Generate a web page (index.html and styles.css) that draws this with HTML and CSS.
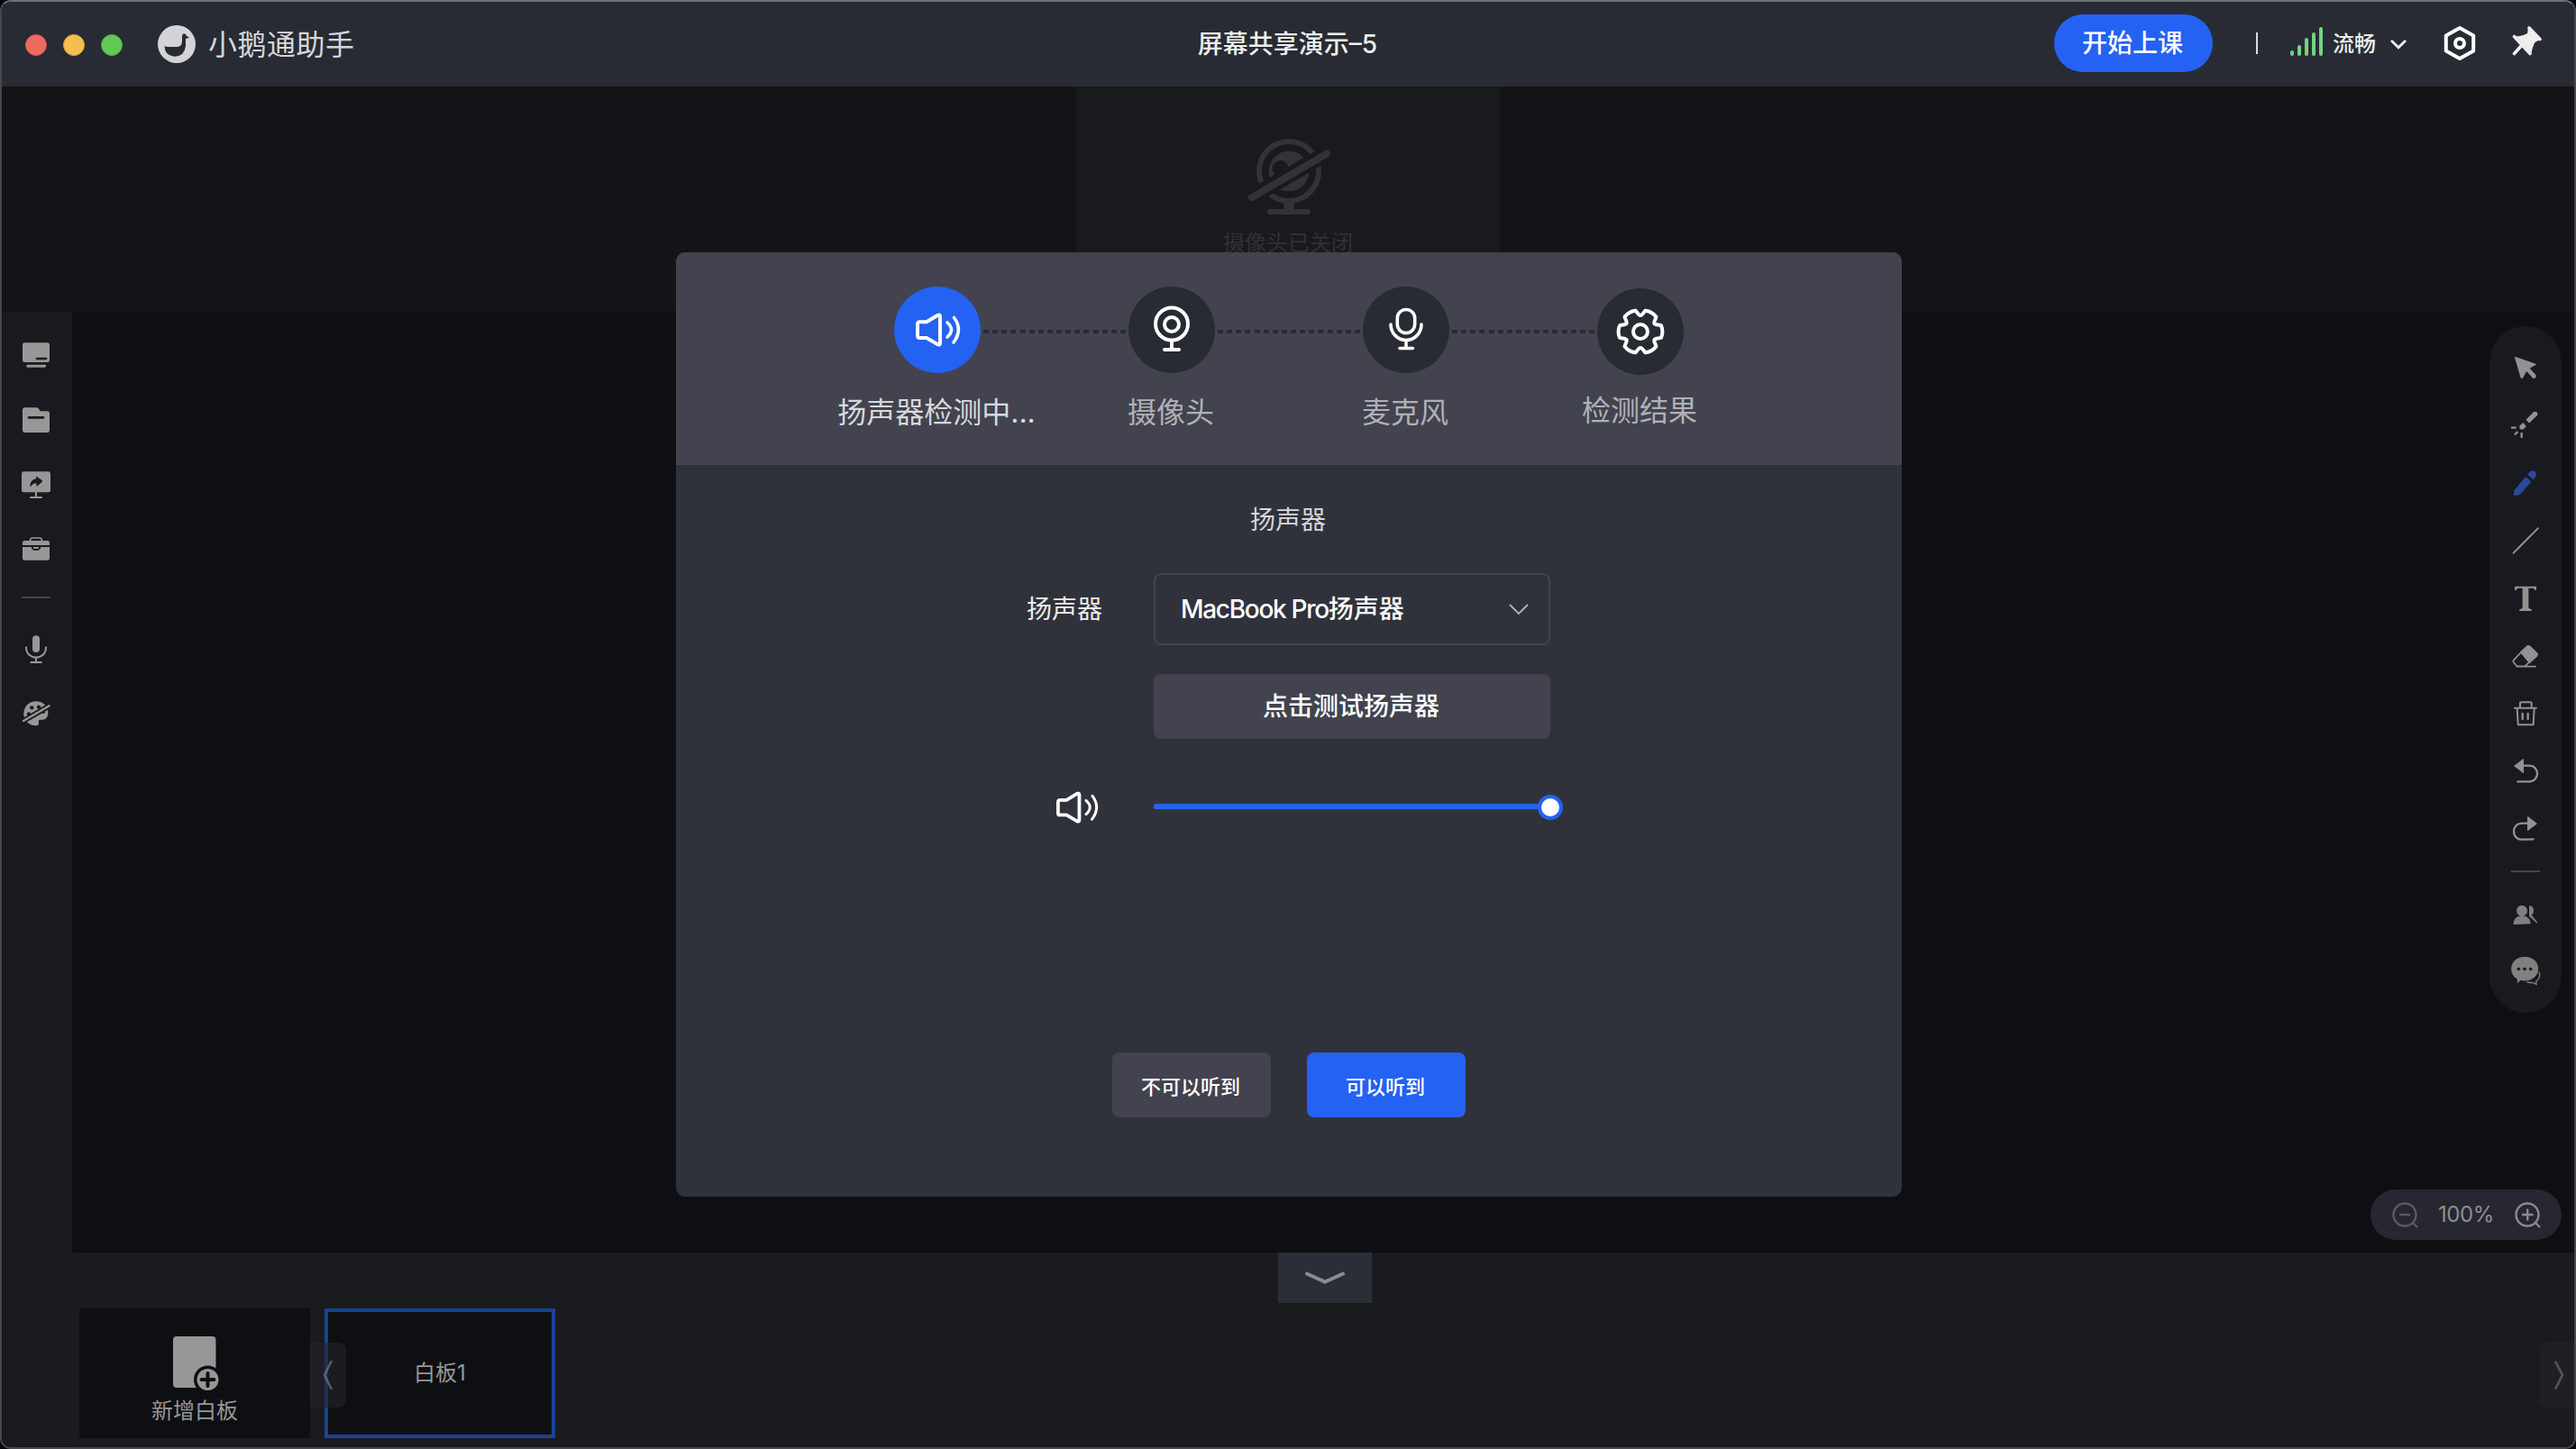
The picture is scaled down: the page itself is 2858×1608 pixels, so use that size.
FILE: index.html
```html
<!DOCTYPE html>
<html lang="zh-CN">
<head>
<meta charset="utf-8">
<title>小鹅通助手</title>
<link rel="stylesheet" href="styles.css">
</head>
<body>
<div class="window">
  <header class="titlebar">
    <div class="titlebar-left">
      <div class="lights"><i class="light red"></i><i class="light yellow"></i><i class="light green"></i></div>
      <svg class="logo" viewBox="525 83 126 126"><circle cx="588" cy="146" r="63" fill="#d4d4d7"/><path fill="#282b33" d="M548 152Q552 155 560 155H590Q606 153 606 136V120Q607 111 613 111Q619 112 621 119L629 123Q628 128 618 127V152Q614 186 582 187Q548 184 548 152Z"/></svg>
      <span class="brand">小鹅通助手</span>
    </div>
    <h1 class="title">屏幕共享演示–5</h1>
    <div class="titlebar-right">
      <button class="start">开始上课</button>
      <i class="sep"></i>
      <svg class="signal" viewBox="0 0 36 32" fill="#73d286"><rect y="26" width="4" height="6" rx="2"/><rect x="8" y="20" width="4" height="12" rx="2"/><rect x="16" y="12" width="4" height="20" rx="2"/><rect x="24" y="6" width="4" height="26" rx="2"/><rect x="32" width="4" height="32" rx="2"/></svg>
      <span class="network">流畅</span>
      <svg class="caret" viewBox="0 0 16 10"><path d="M1.5 1.5L8 8L14.500 1.500" fill="none" stroke="#eee" stroke-width="2.600" stroke-linecap="round"/></svg>
      <svg class="settings" viewBox="0 0 36 40" fill="none" stroke="#fff" stroke-width="4" stroke-linejoin="round"><path d="M18 3L33.200 11.500V28.500L18 37L2.800 28.500V11.500Z"/><circle cx="18" cy="20" r="5"/></svg>
      <svg class="pin" viewBox="0 0 34 34" stroke="#eee" stroke-width="3.600" stroke-linecap="round"><path d="M19 2L31 14.500M2.500 11.500L20 30.500M11 21L2.500 30.500"/><path fill="#eee" stroke="none" d="M18 2L31 15L25.500 18Q23 22 21.500 30L4 11Q11 12 17 8Z"/></svg>
    </div>
  </header>

  <section class="videos">
    <div class="video">
      <svg class="cam-off" viewBox="612 450 276 276" fill="none" stroke="#323337" stroke-width="18"><circle cx="750" cy="570" r="99"/><circle cx="750" cy="570" r="67" fill="#323337" stroke="none"/><circle cx="722" cy="561" r="27" fill="#191a1e" stroke="none"/><path d="M750 672V700" stroke-width="34"/><path d="M687 705H813" stroke-linecap="round"/><path d="M612 664L888 504" stroke="#191a1e" stroke-width="52"/><path d="M626 658L876 512" stroke-width="24" stroke-linecap="round"/></svg>
      <span>摄像头已关闭</span>
    </div>
  </section>

  <div class="workspace">
    <nav class="sidebar">
      <a><svg viewBox="48 120 144 144" fill="#979797"><rect x="75" y="151" width="90" height="65" rx="7"/><rect x="88" y="224" width="65" height="9" rx="4"/><path d="M123 204H153" stroke="#181a1f" stroke-width="8" stroke-linecap="round"/></svg></a>
      <a><svg viewBox="48 336 144 144" fill="#979797"><path d="M82 367H122Q126 367 128 370L134 379H158Q165 379 165 386V443Q165 450 158 450H82Q75 450 75 443V374Q75 367 82 367Z"/><path d="M96 400H144" stroke="#181a1f" stroke-width="8" stroke-linecap="round"/></svg></a>
      <a><svg viewBox="48 552 144 144" fill="#979797"><rect x="72" y="580" width="96" height="69" rx="7"/><path d="M120 648V665M102 666H138" stroke="#979797" stroke-width="6" stroke-linecap="round"/><path fill="#181a1f" d="M121 596Q124 596 126 599L140 609Q142 612 140 614L126 627Q121 630 121 625V619Q108 620 102 630Q100 632 100 627Q101 607 120 604Z"/></svg></a>
      <a><svg viewBox="48 768 144 144" fill="#979797"><path d="M101 811V807Q101 801 108 801H132Q139 801 139 807V811" fill="none" stroke="#979797" stroke-width="5"/><path d="M81 810H159Q165 810 165 816V825H75V816Q75 810 81 810ZM75 831H104Q106 843 120 843Q134 843 136 831H165V869Q165 875 159 875H81Q75 875 75 869Z"/><path d="M110 831H130Q130 837 120 837Q110 837 110 831Z"/></svg></a>
      <hr>
      <a><svg viewBox="48 1098 144 144" fill="none" stroke="#979797" stroke-width="6" stroke-linecap="round"><rect x="108" y="1126" width="24" height="56" rx="12" fill="#979797" stroke="none"/><path d="M87 1165C87 1210 153 1210 153 1165M120 1200V1214M103 1215H137"/></svg></a>
      <a><svg viewBox="48 1314 144 144"><path fill="#979797" d="M120 1345C145 1345 160 1362 160 1383C160 1400 150 1408 134 1406Q126 1407 129 1415Q131 1425 120 1426C96 1426 79 1408 79 1386C79 1362 97 1345 120 1345Z"/><g fill="#181a1f"><circle cx="106" cy="1366" r="6.500"/><circle cx="129" cy="1364" r="6.500"/><circle cx="96" cy="1387" r="6.500"/><circle cx="144" cy="1379" r="6.500"/></g><path d="M78 1410L164 1360" stroke="#181a1f" stroke-width="18"/><path d="M78 1410L164 1360" stroke="#979797" stroke-width="7" stroke-linecap="round"/></svg></a>
    </nav>

    <div class="main">
      <div class="canvas">
        <nav class="tools">
          <a><svg viewBox="114 102 144 144" fill="#929292" stroke="#929292" stroke-linejoin="round" stroke-linecap="round"><path stroke-width="4" d="M152 140L219 163L201 173L184 191L176 207Q173 209 171 205Z"/><path d="M195 181L214 202" stroke-width="15"/></svg></a>
          <a><svg viewBox="114 294 144 144" fill="none" stroke="#929292"><path d="M193 353L218 328" stroke-width="16"/><circle cx="218" cy="328" r="8" fill="#929292" stroke="none"/><path d="M183 363L174 372" stroke-width="16"/><circle cx="174" cy="372" r="8" fill="#929292" stroke="none"/><path d="M138 374H155M160 387L150 397M173 390V408" stroke-width="7"/></svg></a>
          <a><svg viewBox="114 486 144 144" fill="#284b98"><path d="M187 537L205 554L169 595Q161 600 150 600Q146 600 147 595L148 583Z"/><path d="M193 530L201 520Q208 514 217 519Q226 529 219 538L211 547Z"/></svg></a>
          <a><svg viewBox="114 678 144 144"><path d="M146 791L227 709" stroke="#929292" stroke-width="6" stroke-linecap="round"/></svg></a>
          <a><svg viewBox="114 870 144 144" fill="#929292"><path d="M150 902H222V914H216Q216 908 209 908H196V973Q196 977 206 978V984H166V978Q176 977 176 973V908H163Q156 908 156 914H150Z"/></svg></a>
          <a><svg viewBox="114 1062 144 144"><path fill="#929292" stroke="#929292" stroke-width="5" stroke-linejoin="round" d="M171 1121L192 1101Q196 1099 200 1102L224 1125Q227 1129 224 1133L199 1156Z"/><path fill="none" stroke="#929292" stroke-width="5" stroke-linecap="round" stroke-linejoin="round" d="M170 1123L147 1147Q143 1152 147 1156L157 1168H184L199 1154M157 1169H219"/></svg></a>
          <a><svg viewBox="114 84 144 144" fill="none" stroke="#929292" stroke-width="6" stroke-linecap="round" stroke-linejoin="round"><path d="M150 137H222M168 136V121Q168 118 171 118H202Q206 118 206 121V136M158 139L161 191Q161 193 164 193H209Q212 193 212 191L215 139"/><path d="M176 156V174M194 156V174" stroke-width="7"/></svg></a>
          <a><svg viewBox="114 276 144 144"><path fill="#929292" d="M147 330L177 307Q180 305 180 309V352Q180 356 177 353Z"/><path fill="none" stroke="#929292" stroke-width="7" stroke-linecap="round" d="M178 329H198C234 329 234 382 198 382H160"/></svg></a>
          <a><svg viewBox="114 468 144 144"><path fill="#929292" d="M225 522L195 499Q192 497 192 501V544Q192 548 195 545Z"/><path fill="none" stroke="#929292" stroke-width="7" stroke-linecap="round" d="M194 521H174C138 521 138 575 174 575L212 574"/></svg></a>
          <hr>
          <a><svg viewBox="114 753 144 144" fill="#808080"><circle cx="174" cy="812" r="18"/><path d="M146 857C146 838 158 829 174 829S202 838 203 854Q203 856 200 856L149 858Q146 858 146 857ZM198 795Q213 796 213 812Q213 822 206 826L225 850Q226 854 223 853L198 830Z"/></svg></a>
          <a><svg viewBox="114 945 144 144" fill="#808080"><path d="M230 1015Q238 1030 226 1043L221 1047L222 1057L211 1051Q198 1053 189 1048" stroke="#808080" stroke-width="4" fill="none"/><path stroke="#181a1f" stroke-width="3" d="M183 964C210 964 230 982 230 1005S210 1047 183 1047Q177 1047 171 1045L158 1055Q156 1054 157 1040C144 1032 137 1020 137 1005C137 982 157 964 183 964Z"/><g fill="#181a1f"><circle cx="163" cy="1006" r="5.500"/><circle cx="183" cy="1006" r="5.500"/><circle cx="203" cy="1006" r="5.500"/></g></svg></a>
        </nav>
        <div class="zoom">
          <svg class="faint" viewBox="0 0 32 32" fill="none" stroke="#5a5a60" stroke-width="2.400"><circle cx="15" cy="15" r="12.500"/><path d="M9 15H21M24 24L29 29"/></svg>
          <span>100%</span>
          <svg viewBox="0 0 32 32" fill="none" stroke="#8a8a8c" stroke-width="2.400"><circle cx="15" cy="15" r="12.500"/><path d="M9 15H21.500M15.200 8.500V21.500M24 24L29 29"/></svg>
        </div>
      </div>

      <footer class="boards">
        <button class="fold"><svg viewBox="0 0 44 14"><path d="M2 2.500L22 11.500L42 2.500" fill="none" stroke="#8c8c8c" stroke-width="4" stroke-linecap="round"/></svg></button>
        <div class="board-list">
          <div class="board add">
            <svg viewBox="0 0 52 62"><rect x="0" y="0" width="47.500" height="57" rx="4" fill="#979797"/><circle cx="38.500" cy="48" r="15.500" fill="#0e0f13"/><circle cx="38.500" cy="48" r="12" fill="#979797"/><path d="M38.500 41V55M31.500 48H45.500" stroke="#0e0f13" stroke-width="4" stroke-linecap="round"/></svg>
            <span>新增白板</span>
          </div>
          <div class="board active">白板1</div>
        </div>
        <button class="nav prev"><svg viewBox="0 0 12 34"><path d="M9.500 2L2 17L9.500 32" fill="none" stroke="#ccc" stroke-opacity=".35" stroke-width="2.600" stroke-linecap="round" stroke-linejoin="round"/></svg></button>
        <button class="nav next"><svg viewBox="0 0 12 34"><path d="M2.500 2.500L10 17L2.500 31.500" fill="none" stroke="#55565a" stroke-width="2.600" stroke-linecap="round" stroke-linejoin="round"/></svg></button>
      </footer>
    </div>
  </div>

  <div class="dialog">
    <ol class="steps">
      <li class="step current">
        <div class="badge"><svg viewBox="0 0 96 96" fill="none" stroke="#fff" stroke-width="4" stroke-linecap="round" stroke-linejoin="round"><path d="M28.500 39.300H36L48.500 31.800Q51 30.500 51 33.500V62.500Q51 65.500 48.500 64.200L36 57H28.500Q26 57 26 54.500V41.800Q26 39.300 28.500 39.300Z"/><path d="M59 40Q68 48 59 56M66.500 34.500Q76.500 48 66 62" stroke-width="3.600"/></svg></div>
        <span>扬声器检测中...</span>
      </li>
      <li class="step">
        <div class="badge"><svg viewBox="0 0 96 96" fill="none" stroke="#fff" stroke-width="4" stroke-linecap="round"><ellipse cx="48" cy="41.500" rx="18" ry="18"/><circle cx="48" cy="42" r="8"/><path d="M48 60V69M40 70H56"/></svg></div>
        <span>摄像头</span>
      </li>
      <li class="step">
        <div class="badge"><svg viewBox="0 0 96 96" fill="none" stroke="#fff" stroke-width="3.600" stroke-linecap="round"><rect x="38.300" y="25.500" width="19.400" height="26" rx="9.700"/><path d="M31 42A17 17.500 0 0 0 65 42M48 60V68M41 68.500H55.500"/></svg></div>
        <span>麦克风</span>
      </li>
      <li class="step last">
        <div class="badge"><svg viewBox="-48 -48 96 96" fill="none" stroke="#fff" stroke-width="4" stroke-linecap="round"><circle r="8"/><path id="tooth" d="M15.600 -9C16.900 -6.800 20.500 -8 23 -6.800C24.600 -3 24.600 3 23 6.800C20.500 8 16.900 6.800 15.600 9"/><use href="#tooth" transform="rotate(60)"/><use href="#tooth" transform="rotate(120)"/><use href="#tooth" transform="rotate(180)"/><use href="#tooth" transform="rotate(240)"/><use href="#tooth" transform="rotate(300)"/></svg></div>
        <span>检测结果</span>
      </li>
    </ol>
    <div class="panel">
      <h2>扬声器</h2>
      <div class="form">
        <label>扬声器</label>
        <div class="select"><span><span class="latin">MacBook Pro</span>扬声器</span><svg viewBox="0 0 22 13"><path d="M1.500 1.500L11 11L20.500 1.500" fill="none" stroke="#b4b5b9" stroke-width="1.800" stroke-linecap="round"/></svg></div>
        <button class="test">点击测试扬声器</button>
        <svg class="speaker" viewBox="24 28 52 40" fill="none" stroke="#fff" stroke-width="4" stroke-linecap="round" stroke-linejoin="round"><path d="M28.500 39.300H36L48.500 31.800Q51 30.500 51 33.500V62.500Q51 65.500 48.500 64.200L36 57H28.500Q26 57 26 54.500V41.800Q26 39.300 28.500 39.300Z"/><path d="M59 40Q68 48 59 56M66.500 34.500Q76.500 48 66 62" stroke-width="3.200"/></svg>
        <div class="slider"><i class="track"></i><i class="thumb"></i></div>
      </div>
      <div class="actions"><button>不可以听到</button><button class="primary">可以听到</button></div>
    </div>
  </div>
</div>
</body>
</html>
```
FILE: styles.css
```css
* { box-sizing: border-box; margin: 0; padding: 0; }
html { background: #04050f; }
body { width: 2858px; height: 1608px; overflow: hidden; font-family: Inter, "Noto Sans CJK SC", sans-serif; font-size: 28px; line-height: 1.4; color: #fff; }
button { border: 0; color: inherit; font: inherit; }
svg { display: block; flex: none; }
h1, h2 { font-weight: 400; font-size: 28px; }
span, button, h1, h2 { white-space: nowrap; }

.window { position: relative; width: 2858px; height: 1608px; border: 2px solid #47484c; border-top-color: #6c6e73; border-radius: 12px; overflow: hidden; display: flex; flex-direction: column; background: #0e0f13; }

/* title bar */
.titlebar { height: 94px; flex: none; background: #282b33; display: grid; grid-template-columns: 1fr auto 1fr; align-items: center; }
.titlebar-left { display: flex; align-items: center; padding: 2px 0 0 26px; }
.lights { display: flex; gap: 18px; }
.light { width: 24px; height: 24px; border-radius: 50%; border: 1px solid #d2564b; background: #ed6a5f; }
.light.yellow { background: #f5bf50; border-color: #d8a13c; }
.light.green { background: #62c955; border-color: #50a940; }
.logo { width: 42px; height: 42px; margin: -2px 14px 0 39px; }
.brand { font-size: 32px; letter-spacing: .5px; color: #d6d6d9; }
.title { color: #eee; font-weight: 500; padding-top: 1px; margin-left: -1px; }
.titlebar-right { display: flex; align-items: center; justify-content: flex-end; height: 64px; padding-right: 35px; margin-top: -2px; }
.start { width: 176px; height: 64px; border-radius: 32px; background: #2462f4; font-weight: 500; padding: 2px 2px 0 0; }
.sep { width: 2px; height: 24px; background: #dcdcdd; margin: 0 36px 0 48px; }
.signal { width: 36px; height: 32px; margin-top: -4px; }
.network { font-size: 24px; margin: 1px 16px 0 11px; color: #eee; font-weight: 500; }
.caret { width: 18px; height: 11px; margin-top: 2px; }
.settings { width: 36px; height: 40px; margin: 0 40px 0 41px; }
.pin { width: 34px; height: 34px; margin-top: -4px; }

/* camera strip */
.videos { height: 250px; flex: none; background: #131418; display: flex; justify-content: center; }
.video { width: 470px; background: #191a1e; display: flex; flex-direction: column; align-items: center; padding-top: 54px; color: #303135; font-size: 24px; }
.cam-off { width: 92px; height: 92px; margin-left: 2px; }
.video span { margin-top: 11px; }

.workspace { flex: 1; display: flex; min-height: 0; }
.sidebar { width: 78px; background: #181a1f; padding: 12px 2px 0 0; display: flex; flex-direction: column; align-items: center; }
.sidebar a { height: 72px; display: flex; align-items: center; }
.sidebar svg, .tools svg { width: 48px; height: 48px; }
hr { width: 32px; height: 2px; border: 0; background: #434448; flex: none; }
.sidebar hr { margin: 16px 0 20px; }

.main { flex: 1; display: flex; flex-direction: column; }
.canvas { flex: 1; padding: 16px 14px 14px; display: flex; flex-direction: column; align-items: flex-end; justify-content: space-between; }
.tools { width: 80px; height: 762px; border-radius: 40px; background: #181a1f; padding-top: 14px; display: flex; flex-direction: column; align-items: center; }
.tools a { height: 64px; display: flex; align-items: center; }
.tools hr { margin: 14px 0 15px; }
.zoom { width: 212px; height: 56px; border-radius: 28px; background: #272731; display: flex; align-items: center; justify-content: space-between; padding: 0 21px 0 23px; font-size: 24px; color: #8f8f8f; }
.zoom svg { width: 32px; height: 32px; margin-top: 2px; }
.zoom span { letter-spacing: -.4px; margin-right: 2px; }

/* whiteboard strip */
.boards { position: relative; height: 216px; background: #1a1b1f; display: flex; flex-direction: column; }
.fold { width: 104px; height: 56px; margin-left: 1338px; background: #2c2e37; display: flex; justify-content: center; padding-top: 21px; }
.fold svg { width: 44px; height: 14px; }
.board-list { display: flex; gap: 16px; padding: 6px 8px; }
.board { width: 256px; height: 144px; background: #0e0f13; color: #979797; font-size: 24px; display: flex; flex-direction: column; align-items: center; justify-content: center; }
.board.add { justify-content: flex-start; padding-top: 31px; }
.board.add svg { width: 52px; height: 62px; margin-left: 3px; }
.board.add span { margin-top: 4px; }
.board.active { border: 4px solid #1a4396; }
.nav { position: absolute; top: 100px; height: 72px; display: flex; align-items: center; }
.nav svg { width: 12px; height: 34px; }
.prev { left: 264px; width: 40px; border-radius: 0 8px 8px 0; background: rgba(35, 36, 44, .6); padding-left: 14px; }
.next { right: 0; width: 38px; border-radius: 8px 0 0 8px; background: #1f2025; padding-left: 15px; }

/* device check dialog */
.dialog { position: absolute; left: 748px; top: 278px; width: 1360px; height: 1048px; border-radius: 10px; overflow: hidden; background: #30323b; }
.steps { height: 236px; background: #42434f; list-style: none; display: flex; justify-content: center; gap: 44px; padding: 38px 0 0 0; }
.step { position: relative; width: 216px; display: flex; flex-direction: column; align-items: center; font-size: 32px; color: #b0b1b7; }
.step.current { color: #d8d8db; }
.badge { width: 96px; height: 96px; border-radius: 50%; background: #282b33; }
.current .badge { background: #2462f4; }
.step span { line-height: 44px; margin: 22px 2px 0 0; }
.step.last { padding-top: 2px; }
.step.last span { margin-top: 18px; }
.step:not(.last)::after { content: ""; position: absolute; left: 159px; top: 48px; width: 158px; height: 4px; background: repeating-linear-gradient(90deg, #282b33 0 6px, transparent 6px 10.130px); }
.panel { display: flex; flex-direction: column; align-items: center; }
.panel h2 { color: #d6d6d9; line-height: 40px; margin: 41px 2px 0 0; }
.form { margin-top: 39px; display: grid; grid-template-columns: 84px 440px; column-gap: 56px; grid-template-rows: 80px 72px 28px; row-gap: 32px; align-items: center; align-self: flex-start; margin-left: 390px; }
.form label { color: #eee; margin-left: -1px; padding-top: 2px; }
.select { height: 80px; border: 2px solid #42434f; border-radius: 8px; display: flex; align-items: center; justify-content: space-between; padding: 0 22px 0 28px; font-weight: 500; }
.select > span { padding-top: 2px; }
.latin { letter-spacing: -1.300px; }
.select svg { width: 22px; height: 13px; }
.test { grid-column: 2; height: 72px; border-radius: 8px; background: #42434f; padding: 2px 2px 0 0; font-weight: 500; }
.speaker { width: 49px; height: 38px; justify-self: end; margin: 60px 3px 0 0; }
.slider { margin-top: 60px; height: 28px; display: flex; align-items: center; }
.track { width: 427px; height: 6px; flex: none; background: #2462f4; border-radius: 2px 0 0 2px; margin-top: -2px; }
.thumb { width: 28px; height: 28px; flex: none; border: 4px solid #2462f4; border-radius: 50%; background: #fff; margin-left: -1px; }
.actions { display: flex; gap: 40px; margin-top: 288px; }
.actions button { width: 176px; height: 72px; border-radius: 8px; background: #42434f; font-size: 22px; padding: 4px 2px 0 0; font-weight: 500; }
.actions .primary { background: #2462f4; }
```
